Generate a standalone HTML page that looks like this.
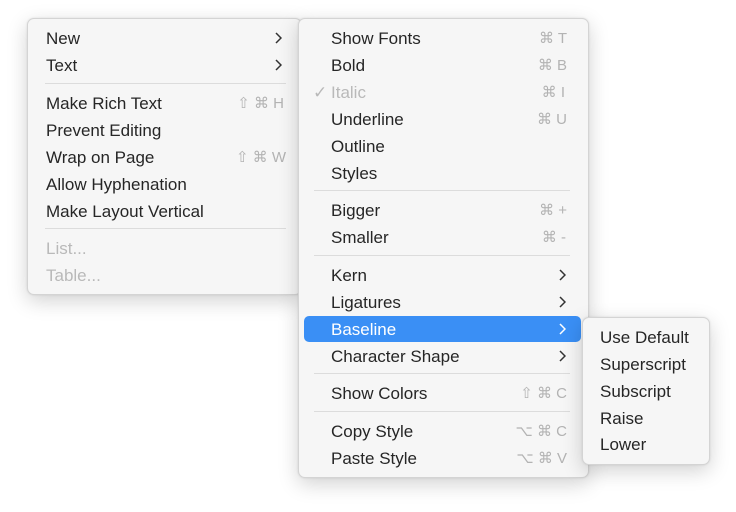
<!DOCTYPE html>
<html><head><meta charset="utf-8"><style>
body{margin:0;width:736px;height:512px;background:#fff;position:relative;overflow:hidden;font-family:"Liberation Sans",sans-serif;}
.m{position:absolute;background:#f6f6f6;border:1px solid #d4d4d4;border-radius:7px;box-shadow:0 6px 20px rgba(0,0,0,0.18),0 0 2px rgba(0,0,0,0.1);}
.i{position:absolute;font-size:17px;color:#262626;line-height:20px;white-space:nowrap;}
.d{color:#b9b9b9;}
.s{position:absolute;font-size:15px;color:#b3b3b3;line-height:20px;text-align:right;white-space:nowrap;}
.sep{position:absolute;height:1px;background:#dcdcdc;}
.ar{position:absolute;width:7px;height:12px;}
.hl{position:absolute;background:#3a8ff5;border-radius:5px;}
</style></head><body>
<div class="m" style="left:27px;top:18px;width:273px;height:275px;"></div>
<div class="i" style="left:46px;top:29px">New</div>
<div class="i" style="left:46px;top:56px">Text</div>
<div class="sep" style="left:45px;top:83px;width:241px"></div>
<div class="i" style="left:46px;top:94px">Make Rich Text</div>
<div class="i" style="left:46px;top:121px">Prevent Editing</div>
<div class="i" style="left:46px;top:148px">Wrap on Page</div>
<div class="i" style="left:46px;top:175px">Allow Hyphenation</div>
<div class="i" style="left:46px;top:202px">Make Layout Vertical</div>
<div class="sep" style="left:45px;top:228px;width:241px"></div>
<div class="i d" style="left:46px;top:239px">List...</div>
<div class="i d" style="left:46px;top:266px">Table...</div>
<div class="s" style="right:452px;top:94px">⇧ ⌘ H</div>
<div class="s" style="right:450px;top:148px">⇧ ⌘ W</div>
<svg class="ar" style="left:275px;top:32px" viewBox="0 0 7 12"><path d="M1 1l5 5-5 5" fill="none" stroke="#333" stroke-width="1.5"/></svg>
<svg class="ar" style="left:275px;top:59px" viewBox="0 0 7 12"><path d="M1 1l5 5-5 5" fill="none" stroke="#333" stroke-width="1.5"/></svg>

<div class="m" style="left:298px;top:18px;width:289px;height:458px;"></div>
<div class="i" style="left:331px;top:29px">Show Fonts</div>
<div class="i" style="left:331px;top:56px">Bold</div>
<div class="i d" style="left:313px;top:83px">✓</div>
<div class="i d" style="left:331px;top:83px">Italic</div>
<div class="i" style="left:331px;top:110px">Underline</div>
<div class="i" style="left:331px;top:137px">Outline</div>
<div class="i" style="left:331px;top:164px">Styles</div>
<div class="sep" style="left:314px;top:190px;width:256px"></div>
<div class="i" style="left:331px;top:201px">Bigger</div>
<div class="i" style="left:331px;top:228px">Smaller</div>
<div class="sep" style="left:314px;top:255px;width:256px"></div>
<div class="i" style="left:331px;top:266px">Kern</div>
<div class="i" style="left:331px;top:293px">Ligatures</div>
<div class="hl" style="left:304px;top:316px;width:277px;height:26px"></div>
<div class="i" style="left:331px;top:320px;color:#fff">Baseline</div>
<div class="i" style="left:331px;top:347px">Character Shape</div>
<div class="sep" style="left:314px;top:373px;width:256px"></div>
<div class="i" style="left:331px;top:384px">Show Colors</div>
<div class="sep" style="left:314px;top:411px;width:256px"></div>
<div class="i" style="left:331px;top:422px">Copy Style</div>
<div class="i" style="left:331px;top:449px">Paste Style</div>
<div class="s" style="right:169px;top:29px">⌘ T</div>
<div class="s" style="right:169px;top:56px">⌘ B</div>
<div class="s" style="right:171px;top:83px">⌘ I</div>
<div class="s" style="right:169px;top:110px">⌘ U</div>
<div class="s" style="right:169px;top:201px">⌘ +</div>
<div class="s" style="right:170px;top:228px">⌘ -</div>
<div class="s" style="right:169px;top:384px">⇧ ⌘ C</div>
<div class="s" style="right:169px;top:422px">⌥ ⌘ C</div>
<div class="s" style="right:169px;top:449px">⌥ ⌘ V</div>
<svg class="ar" style="left:559px;top:269px" viewBox="0 0 7 12"><path d="M1 1l5 5-5 5" fill="none" stroke="#333" stroke-width="1.5"/></svg>
<svg class="ar" style="left:559px;top:296px" viewBox="0 0 7 12"><path d="M1 1l5 5-5 5" fill="none" stroke="#333" stroke-width="1.5"/></svg>
<svg class="ar" style="left:559px;top:323px" viewBox="0 0 7 12"><path d="M1 1l5 5-5 5" fill="none" stroke="#fff" stroke-width="1.5"/></svg>
<svg class="ar" style="left:559px;top:350px" viewBox="0 0 7 12"><path d="M1 1l5 5-5 5" fill="none" stroke="#333" stroke-width="1.5"/></svg>

<div class="m" style="left:582px;top:317px;width:126px;height:146px;"></div>
<div class="i" style="left:600px;top:328px">Use Default</div>
<div class="i" style="left:600px;top:355px">Superscript</div>
<div class="i" style="left:600px;top:382px">Subscript</div>
<div class="i" style="left:600px;top:409px">Raise</div>
<div class="i" style="left:600px;top:435px">Lower</div>
</body></html>
